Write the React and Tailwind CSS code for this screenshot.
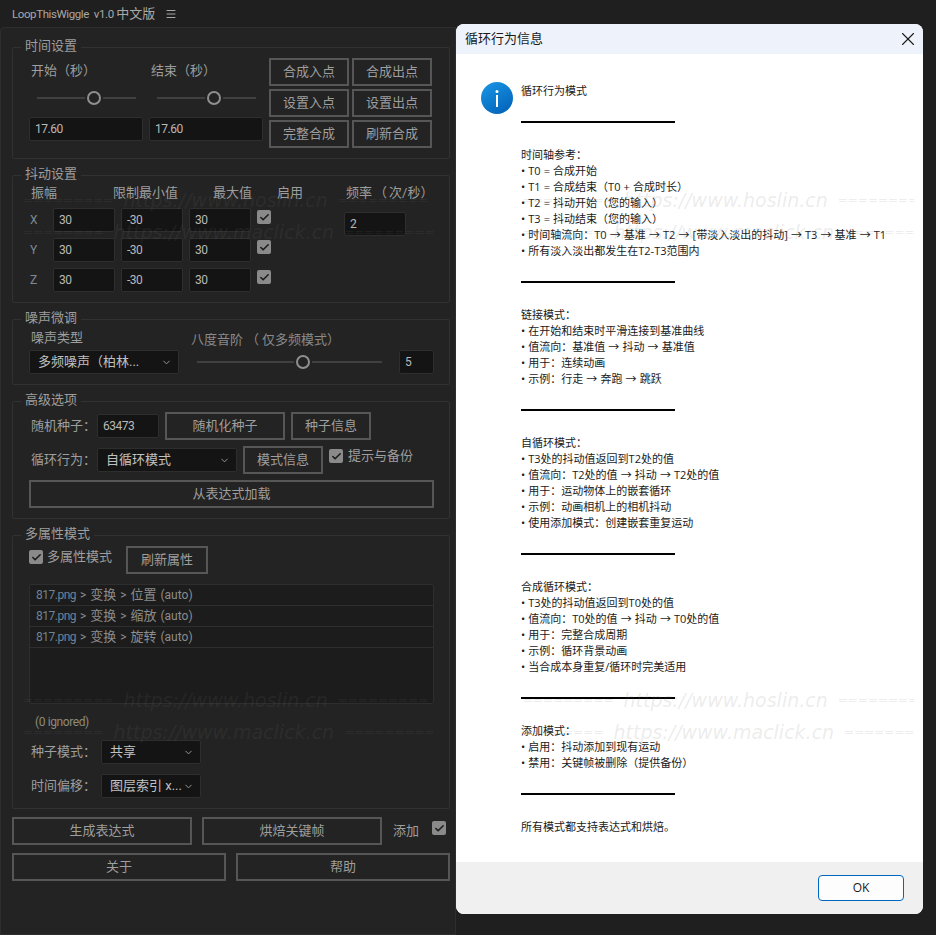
import React from 'react';
import { ChevronDown, Check, X, Menu } from 'lucide-react';

const Btn = ({ className = '', children }) => (
    <button className={"flex items-center justify-center shrink-0 h-[28px] border-2 border-[#565656] text-[13px] text-[#9e9e9e] " + className}>{children}</button>
);

const Field = ({ className = '', value }) => (
    <div className={"flex items-center h-[24px] px-[5px] bg-[#141414] border border-[#2e2e2e] rounded-[2px] text-[12px] tracking-[-0.5px] text-[#b9b9b9] " + className}>{value}</div>
);

const Select = ({ className = '', value }) => (
    <div className={"flex items-center justify-between h-[24px] pl-[8px] pr-[6px] bg-[#141414] border border-[#2e2e2e] rounded-[2px] text-[13px] text-[#c0c0c0] " + className}>
        <span className="whitespace-nowrap">{value}</span>
        <ChevronDown size={11} className="text-[#a0a0a0]" />
    </div>
);

const Tick = ({ className = '' }) => (
    <div className={"flex items-center justify-center w-[14px] h-[14px] shrink-0 rounded-[2px] bg-[#8a8a8a] " + className}>
        <Check size={11} strokeWidth={3.5} className="text-[#1c1c1c]" />
    </div>
);

const Slider = ({ left, right, className = '' }) => (
    <div className={"flex items-center h-[14px] " + className}>
        <div className="h-[2px] bg-[#404040]" style={{ width: left }}></div>
        <div className="w-[14px] h-[14px] mx-[2px] shrink-0 rounded-full border-2 border-[#8f8f8f]"></div>
        <div className="h-[2px] bg-[#404040]" style={{ width: right }}></div>
    </div>
);

const Group = ({ title, className = '', children }) => (
    <fieldset className={"w-[438px] ml-[12px] pl-[16px] pr-[15px] pb-[10px] border border-[#323232] rounded-[2px] " + className}>
        <legend className="-ml-[8px] px-[4px] h-[18px] leading-[16px] text-[13px] text-[#9e9e9e]">{title}</legend>
        {children}
    </fieldset>
);

// faint site stamp that runs over the whole window
const Watermark = ({ className = '', url, left, right }) => (
    <div className={"absolute flex items-center overflow-hidden h-[30px] pointer-events-none whitespace-nowrap font-['DejaVu_Sans',sans-serif] italic text-[#707070]/15 " + className}>
        <span className="shrink-0 text-[12px] not-italic">{'='.repeat(left)}</span>
        <span className="mx-[10px] shrink-0 text-[19px]">{url}</span>
        <span className="shrink-0 text-[12px] not-italic">{'='.repeat(right)}</span>
    </div>
);

const dialogLines = [
    '循环行为模式', '', '-', '',
    '时间轴参考：', '• T0 = 合成开始', '• T1 = 合成结束（T0 + 合成时长）', '• T2 = 抖动开始（您的输入）', '• T3 = 抖动结束（您的输入）',
    '• 时间轴流向：T0 → 基准 → T2 → [带淡入淡出的抖动] → T3 → 基准 → T1', '• 所有淡入淡出都发生在T2-T3范围内', '', '-', '',
    '链接模式：', '• 在开始和结束时平滑连接到基准曲线', '• 值流向：基准值 → 抖动 → 基准值', '• 用于：连续动画', '• 示例：行走 → 奔跑 → 跳跃', '', '-', '',
    '自循环模式：', '• T3处的抖动值返回到T2处的值', '• 值流向：T2处的值 → 抖动 → T2处的值', '• 用于：运动物体上的嵌套循环', '• 示例：动画相机上的相机抖动', '• 使用添加模式：创建嵌套重复运动', '', '-', '',
    '合成循环模式：', '• T3处的抖动值返回到T0处的值', '• 值流向：T0处的值 → 抖动 → T0处的值', '• 用于：完整合成周期', '• 示例：循环背景动画', '• 当合成本身重复/循环时完美适用', '', '-', '',
    '添加模式：', '• 启用：抖动添加到现有运动', '• 禁用：关键帧被删除（提供备份）', '', '-', '',
    '所有模式都支持表达式和烘焙。',
];

const axes = ['X', 'Y', 'Z'];
const props = ['位置', '缩放', '旋转'];

const App = () => {
    return (
        <div className="relative w-[936px] h-[935px] overflow-hidden bg-[#1f1f1f] font-['Roboto','Noto_Sans_CJK_SC',sans-serif]">
            <div className="flex items-center h-[27px] pl-[12px] gap-[10px] text-[#a8a8a8]">
                <span className="text-[11.5px] tracking-[-0.4px] whitespace-nowrap">LoopThisWiggle&nbsp; v1.0 <span className="text-[13px] tracking-normal">中文版</span></span>
                <Menu size={12} />
            </div>

            <div className="w-[456px] h-[908px] pt-[10px] bg-[#232323] border border-[#2e2e2e] rounded-tl-[4px]">
                <div className="-ml-[1px]">
                    <Group title="时间设置" className="mb-[7px]">
                        <div className="flex gap-[6px] pt-[2px]">
                            {[0, 1].map((i) => (
                                <div key={i} className="w-[114px]">
                                    <div className="h-[26px] leading-[26px] pl-[2px] text-[13px] text-[#9e9e9e]">{i == 0 ? '开始（秒）' : '结束（秒）'}</div>
                                    <Slider left={48} right={33} className="mt-[7px] ml-[8px]" />
                                    <Field value="17.60" className="mt-[12px]" />
                                </div>
                            ))}
                            <div className="grid grid-cols-[80px_80px] gap-[3px]">
                                <Btn>合成入点</Btn>
                                <Btn>合成出点</Btn>
                                <Btn>设置入点</Btn>
                                <Btn>设置出点</Btn>
                                <Btn>完整合成</Btn>
                                <Btn>刷新合成</Btn>
                            </div>
                        </div>
                    </Group>

                    <Group title="抖动设置" className="mb-[7px]">
                        <div className="flex">
                            <div className="w-[315px]">
                                <div className="flex h-[18px] leading-[18px] text-[13px] text-[#9e9e9e]">
                                    <span className="w-[84px] pl-[2px]">振幅</span>
                                    <span className="w-[100px]">限制最小值</span>
                                    <span className="w-[64px]">最大值</span>
                                    <span>启用</span>
                                </div>
                                <div className="flex flex-col gap-[6px] mt-[6px]">
                                    {axes.map((axis) => (
                                        <div key={axis} className="flex items-start">
                                            <span className="w-[24px] h-[24px] leading-[24px] pl-[1px] text-[12px] text-[#7d8a96]">{axis}</span>
                                            <Field value="30" className="w-[62px]" />
                                            <Field value="-30" className="w-[62px] ml-[6px]" />
                                            <Field value="30" className="w-[62px] ml-[6px]" />
                                            <Tick className="ml-[6px] mt-[2px]" />
                                        </div>
                                    ))}
                                </div>
                            </div>
                            <div>
                                <div className="h-[18px] leading-[18px] pl-[2px] text-[13px] text-[#9e9e9e] whitespace-nowrap">频率<span className="mx-[2px]">（</span>次/秒）</div>
                                <Field value="2" className="w-[62px] mt-[10px]" />
                            </div>
                        </div>
                    </Group>

                    <Group title="噪声微调" className="mb-[7px]">
                        <div className="flex">
                            <div className="w-[150px]">
                                <div className="h-[20px] leading-[20px] pl-[2px] text-[13px] text-[#9e9e9e]">噪声类型</div>
                                <Select value="多频噪声（柏林..." className="mt-[2px]" />
                            </div>
                            <div className="ml-[12px]">
                                <div className="h-[22px] pt-[2px] leading-[20px] text-[13px] text-[#8a8a8a]">八度音阶<span className="mx-[3px]">（</span>仅多频模式）</div>
                                <div className="flex items-center">
                                    <Slider left={97} right={70} className="ml-[6px]" />
                                    <Field value="5" className="w-[35px] ml-[17px] text-[11px]" />
                                </div>
                            </div>
                        </div>
                    </Group>

                    <Group title="高级选项" className="mb-[7px]">
                        <div className="flex items-center mt-[2px] gap-[6px]">
                            <span className="w-[62px] pl-[2px] text-[13px] text-[#9e9e9e] whitespace-nowrap">随机种子：</span>
                            <Field value="63473" className="w-[62px]" />
                            <Btn className="w-[120px]">随机化种子</Btn>
                            <Btn className="w-[80px]">种子信息</Btn>
                        </div>
                        <div className="flex items-center mt-[6px] gap-[6px]">
                            <span className="w-[62px] pl-[2px] text-[13px] text-[#9e9e9e] whitespace-nowrap">循环行为：</span>
                            <Select value="自循环模式" className="w-[140px]" />
                            <Btn className="w-[80px]">模式信息</Btn>
                            <div className="flex items-center self-start mt-[3px] gap-[5px] leading-[14px] text-[13px] text-[#9e9e9e]">
                                <Tick />
                                <span>提示与备份</span>
                            </div>
                        </div>
                        <Btn className="w-full mt-[6px]">从表达式加载</Btn>
                    </Group>

                    <Group title="多属性模式">
                        <div className="flex items-center pt-[2px]">
                            <div className="flex items-center self-start mt-[4px] w-[97px] gap-[4px] leading-[14px] text-[13px] text-[#9e9e9e]">
                                <Tick />
                                <span className="whitespace-nowrap">多属性模式</span>
                            </div>
                            <Btn className="w-[82px]">刷新属性</Btn>
                        </div>
                        <div className="h-[120px] mt-[10px] bg-[#1c1c1c] border border-[#2e2e2e] rounded-[2px]">
                            {props.map((prop) => (
                                <div key={prop} className="h-[21px] leading-[20px] pl-[6px] border-b border-[#2e2e2e] text-[12px] [word-spacing:1px] text-[#8c8c8c] whitespace-nowrap">
                                    <span className="tracking-[-0.5px] text-[#6f8396]">817.png</span> &gt; <span className="text-[13px]">变换</span> &gt; <span className="text-[13px]">{prop}</span> (auto)
                                </div>
                            ))}
                        </div>
                        <div className="h-[18px] leading-[18px] mt-[9px] pl-[6px] text-[12px] tracking-[-0.4px] text-[#8c8c7c]">(0 ignored)</div>
                        <div className="flex items-center mt-[9px]">
                            <span className="w-[72px] pl-[2px] text-[13px] text-[#9e9e9e]">种子模式：</span>
                            <Select value="共享" className="w-[100px]" />
                        </div>
                        <div className="flex items-center mt-[10px]">
                            <span className="w-[72px] pl-[2px] text-[13px] text-[#9e9e9e]">时间偏移：</span>
                            <Select value="图层索引 x..." className="w-[100px]" />
                        </div>
                    </Group>

                    <div className="flex items-center ml-[12px] mt-[8px] gap-[10px]">
                        <Btn className="w-[180px]">生成表达式</Btn>
                        <Btn className="w-[180px]">烘焙关键帧</Btn>
                        <span className="ml-[1px] text-[13px] text-[#9e9e9e] whitespace-nowrap">添加</span>
                        <Tick className="self-start mt-[4px] ml-[3px]" />
                    </div>
                    <div className="flex ml-[12px] mt-[8px] gap-[10px]">
                        <Btn className="w-[214px]">关于</Btn>
                        <Btn className="w-[214px]">帮助</Btn>
                    </div>
                </div>
            </div>

            {/* message box lies over the panel */}
            <div className="absolute left-[456px] top-[24px] w-[467px] h-[890px] flex flex-col bg-white rounded-[8px] overflow-hidden text-[#1a1a1a] font-['Open_Sans','Noto_Sans_CJK_SC',sans-serif]">
                <div className="flex items-center justify-between h-[30px] pb-[1px] pl-[9px] pr-[4px] bg-[#eef3fb] text-[13px]">
                    <span>循环行为信息</span>
                    <X size={22} strokeWidth={1.2} />
                </div>
                <div className="flex flex-1 pl-[25px] pt-[28px]">
                    <svg width="32" height="32" viewBox="0 0 32 32" className="shrink-0">
                        <defs>
                            <linearGradient id="infoFill" x1="0" y1="0" x2="0.6" y2="1">
                                <stop offset="0" stopColor="#1a97e6" />
                                <stop offset="1" stopColor="#0467bd" />
                            </linearGradient>
                        </defs>
                        <circle cx="16" cy="16" r="16" fill="url(#infoFill)" />
                        <rect x="15" y="13" width="2" height="12" fill="#ffffff" />
                        <circle cx="16" cy="9.5" r="1.5" fill="#ffffff" />
                    </svg>
                    <div className="ml-[8px]">
                        {dialogLines.map((line, index) => (
                            line == '-'
                                ? <div key={index} className="flex items-center h-[16px]"><div className="w-[154px] h-[2px] bg-black"></div></div>
                                : <div key={index} className="h-[16px] leading-[17px] text-[11px] [word-spacing:0.25px] whitespace-nowrap">{line}</div>
                        ))}
                    </div>
                </div>
                <div className="flex items-center justify-end h-[52px] pr-[19px] bg-[#f0f0f0]">
                    <button className="w-[86px] h-[26px] bg-[#fdfdfd] border border-[#0067c0] rounded-[4px] text-[12px]">OK</button>
                </div>
            </div>

            <Watermark url="https://www.hoslin.cn" left={9} right={9} className="left-[23px] top-[185px] w-[412px]" />
            <Watermark url="https://www.maclick.cn" left={8} right={9} className="left-[23px] top-[217px] w-[412px]" />
            <Watermark url="https://www.hoslin.cn" left={9} right={9} className="left-[523px] top-[185px] w-[391px]" />
            <Watermark url="https://www.maclick.cn" left={8} right={9} className="left-[523px] top-[217px] w-[391px]" />
            <Watermark url="https://www.hoslin.cn" left={9} right={9} className="left-[23px] top-[685px] w-[412px]" />
            <Watermark url="https://www.maclick.cn" left={8} right={9} className="left-[23px] top-[717px] w-[412px]" />
            <Watermark url="https://www.hoslin.cn" left={9} right={9} className="left-[523px] top-[685px] w-[391px]" />
            <Watermark url="https://www.maclick.cn" left={8} right={9} className="left-[523px] top-[717px] w-[391px]" />
        </div>
    );
}

export default App;
